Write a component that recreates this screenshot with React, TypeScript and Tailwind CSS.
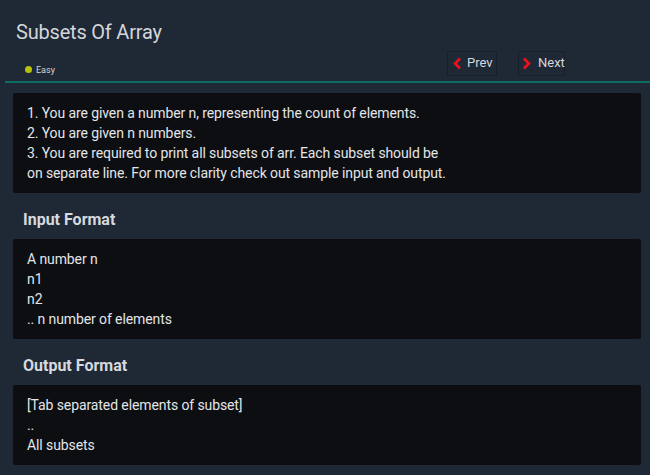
const font = { fontFamily: '"Roboto", "Liberation Sans", sans-serif' };

function Chevron({ dir }: { dir: 'left' | 'right' }) {
  return (
    <svg width="9" height="13" viewBox="0 0 9 13" className="shrink-0">
      <polyline
        points={dir === 'left' ? '7,1.5 2.2,6.5 7,11.5' : '2,1.5 6.8,6.5 2,11.5'}
        fill="none"
        stroke="#e8121c"
        strokeWidth="2.8"
      />
    </svg>
  );
}

function Section({ title, lines }: { title: string; lines: string[] }) {
  return (
    <>
      <h2 className="mt-[15px] mb-[7px] h-[24px] pl-[10px] text-[16px] leading-[24px] font-bold text-[#d6d9de]">
        {title}
      </h2>
      <div className="rounded-[2px] bg-[#0c0e12] pl-[14px] py-[10px] text-[14px] leading-[20px] text-[#e3e5e8] tracking-[-0.1px]">
        {lines.map((l, i) => (
          <div key={i}>{l}</div>
        ))}
      </div>
    </>
  );
}

export default function App() {
  return (
    <div className="w-[650px] h-[475px] overflow-hidden bg-[#1f2835]" style={font}>
      <div className="pl-[16px] pt-[20px]">
        <h1 className="text-[20px] leading-[24px] text-[#d3d6db] tracking-[-0.2px]">Subsets Of Array</h1>
      </div>
      <div className="flex items-center h-[32px] mt-[3px] mb-[2px]">
        <div className="flex items-center gap-[4px] pl-[25px] pt-[13px]">
          <span className="w-[7px] h-[7px] rounded-full bg-[#b8c40a]" />
          <span className="text-[9px] leading-[10px] text-[#cfd3d8]">Easy</span>
        </div>
        <div className="ml-auto mr-[85px] flex items-center gap-[21px]">
          <button className="flex items-center h-[25px] w-[50px] border border-[#17202b] bg-[#1f2835] text-[13px] text-[#d4d7dc]">
            <span className="ml-[5px] flex"><Chevron dir="left" /></span>
            <span className="ml-[5px]">Prev</span>
          </button>
          <button className="flex items-center h-[25px] w-[47px] border border-[#17202b] bg-[#1f2835] text-[13px] text-[#d4d7dc]">
            <span className="ml-[3px] flex"><Chevron dir="right" /></span>
            <span className="ml-[7px]">Next</span>
          </button>
        </div>
      </div>
      <div className="ml-[5px] h-[2px] bg-[#0e6d63]" />
      <div className="px-[13px] pr-[9px] pt-[10px]">
        <div className="rounded-[2px] bg-[#0c0e12] pl-[14px] py-[10px] text-[14px] leading-[20px] text-[#e3e5e8] tracking-[-0.1px]">
          <div>1. You are given a number n, representing the count of elements.</div>
          <div>2. You are given n numbers.</div>
          <div>3. You are required to print all subsets of arr. Each subset should be</div>
          <div>on separate line. For more clarity check out sample input and output.</div>
        </div>
        <Section title="Input Format" lines={['A number n', 'n1', 'n2', '.. n number of elements']} />
        <Section title="Output Format" lines={['[Tab separated elements of subset]', '..', 'All subsets']} />
      </div>
    </div>
  );
}
